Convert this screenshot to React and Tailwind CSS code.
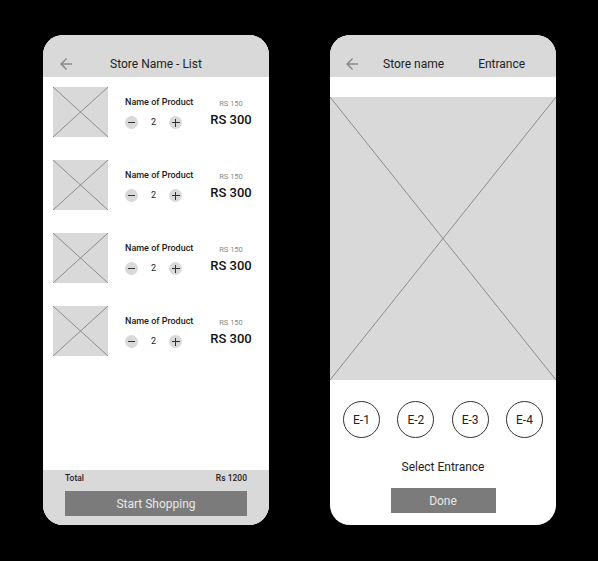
import React from "react";

const font = { fontFamily: "Roboto, 'Liberation Sans', sans-serif" };

// Material-style back arrow
function BackArrow() {
    return (
        <svg width="18" height="18" viewBox="0 0 24 24" className="shrink-0 -ml-[3px]">
            <path
                d="M20 11H7.83l5.59-5.59L12 4l-8 8 8 8 1.41-1.41L7.83 13H20v-2z"
                fill="#8a8a8a"
            />
        </svg>
    );
}

// Grey placeholder with a cross through it
function Placeholder({ className }) {
    return (
        <div className={"bg-[#d9d9d9] shrink-0 " + className}>
            <svg width="100%" height="100%" viewBox="0 0 100 100" preserveAspectRatio="none">
                <line x1="0" y1="0" x2="100" y2="100" stroke="#8c8c8c" strokeWidth="1" vectorEffect="non-scaling-stroke" />
                <line x1="100" y1="0" x2="0" y2="100" stroke="#8c8c8c" strokeWidth="1" vectorEffect="non-scaling-stroke" />
            </svg>
        </div>
    );
}

function ProductRow() {
    return (
        <div className="flex pl-[10px] pr-[12px]">
            <Placeholder className="w-[55px] h-[50px]" />
            <div className="flex-1 ml-[17px] pt-[9px]">
                <p className="text-[9px] leading-[12px] font-medium text-[#1a1a1a]">Name of Product</p>
                {/* Quantity counter */}
                <div className="flex items-center gap-[13px] mt-[8px]">
                    <div className="w-[13px] h-[13px] rounded-full bg-[#d9d9d9] flex items-center justify-center">
                        <div className="w-[7px] h-[1.5px] bg-[#333]" />
                    </div>
                    <span className="text-[9px] leading-[13px] text-[#222]">2</span>
                    <div className="relative w-[13px] h-[13px] rounded-full bg-[#d9d9d9] flex items-center justify-center">
                        <div className="w-[8px] h-[1.5px] bg-[#333]" />
                        <div className="absolute w-[1.5px] h-[8px] bg-[#333]" />
                    </div>
                </div>
            </div>
            <div className="w-[52px] pt-[12px] text-center">
                <p className="text-[7.5px] leading-[9px] text-[#8a8a8a]">RS 150</p>
                <p className="text-[13px] leading-[16px] font-medium text-[#111] mt-[4px]">RS 300</p>
            </div>
        </div>
    );
}

function StoreList() {
    return (
        <div className="w-[226px] h-[490px] rounded-[20px] overflow-hidden bg-white flex flex-col">
            <header className="h-[42px] shrink-0 bg-[#d9d9d9] flex items-start pt-[21px] px-[17px]">
                <div className="w-[13px] h-[16px] flex items-center"><BackArrow /></div>
                <h1 className="flex-1 text-center text-[12px] leading-[16px] text-[#222]">Store Name - List</h1>
                <div className="w-[13px]" />
            </header>

            <main className="flex-1 flex flex-col gap-[23px] pt-[10px]">
                <ProductRow />
                <ProductRow />
                <ProductRow />
                <ProductRow />
            </main>

            {/* Total + action */}
            <footer className="h-[55px] shrink-0 bg-[#d9d9d9] px-[22px] pt-[3px]">
                <div className="flex justify-between text-[8.5px] leading-[10px] font-medium text-[#222]">
                    <span>Total</span>
                    <span>Rs 1200</span>
                </div>
                <button className="mt-[8px] w-full h-[25px] bg-[#7b7b7b] text-[12px] text-[#e8e8e8]">
                    Start Shopping
                </button>
            </footer>
        </div>
    );
}

function EntrancePicker() {
    const entrances = ["E-1", "E-2", "E-3", "E-4"];
    return (
        <div className="w-[226px] h-[490px] rounded-[20px] overflow-hidden bg-white flex flex-col">
            <header className="h-[42px] shrink-0 bg-[#d9d9d9] flex items-start pt-[21px] pl-[16px]">
                <div className="w-[13px] h-[16px] flex items-center"><BackArrow /></div>
                <span className="ml-[24px] text-[12px] leading-[16px] text-[#222]">Store name</span>
                <span className="ml-[34px] text-[12px] leading-[16px] text-[#222]">Entrance</span>
            </header>

            <div className="h-[20px] shrink-0" />
            <Placeholder className="w-full h-[283px]" />

            <div className="flex justify-between px-[13px] mt-[21px]">
                {entrances.map((e) => (
                    <div
                        key={e}
                        className="w-[37px] h-[37px] rounded-full border border-[#333] flex items-center justify-center text-[12px] text-[#222]"
                    >
                        {e}
                    </div>
                ))}
            </div>

            <p className="mt-[21px] text-center text-[12px] leading-[16px] text-[#222]">Select Entrance</p>
            <button className="mt-[13px] mx-auto w-[105px] h-[25px] bg-[#7b7b7b] text-[12px] text-[#e8e8e8]">
                Done
            </button>
        </div>
    );
}

export default function App() {
    return (
        <div className="w-[598px] h-[561px] bg-black flex items-start pt-[35px] pl-[43px] gap-[61px]" style={font}>
            <StoreList />
            <EntrancePicker />
        </div>
    );
}
